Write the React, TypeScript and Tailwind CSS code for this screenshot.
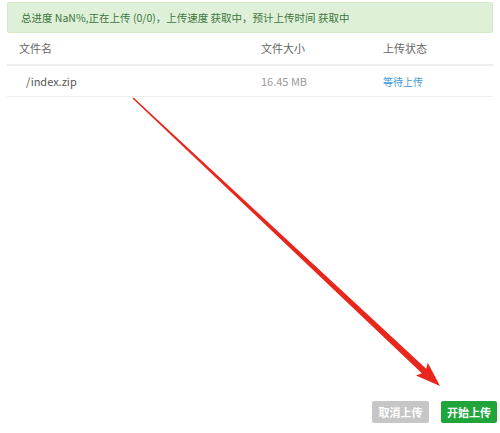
import React from "react";

export default function App() {
  const font = { fontFamily: '"Microsoft YaHei","Noto Sans CJK SC","Noto Sans",sans-serif' };
  return (
    <div className="relative w-[500px] h-[433px] bg-white flex flex-col overflow-hidden" style={font}>
      <div className="mx-[7px] mt-[2px] h-[31px] flex items-center pl-[13px] bg-[#dff0d8] border border-[#d6e9c6] rounded-[2px] text-[10.5px] text-[#3c763d]">
        总进度 NaN%,正在上传 (0/0)，上传速度 获取中，预计上传时间 获取中
      </div>
      <div className="mx-[7px] h-[33px] flex items-center border-b-2 border-[#eeeeee] text-[11px] text-[#666]">
        <div className="w-[254px] pl-[12px]">文件名</div>
        <div className="w-[122px]">文件大小</div>
        <div>上传状态</div>
      </div>
      <div className="mx-[7px] h-[31px] flex items-center border-b border-[#eeeeee] text-[11px]">
        <div className="w-[254px] pl-[19px] text-[#555]">/index.zip</div>
        <div className="w-[122px] text-[#999]">16.45 MB</div>
        <div className="text-[#3c9ad6] text-[10px]">等待上传</div>
      </div>
      <div className="flex-1" />
      <div className="flex justify-end gap-[12px] mr-[3px] mb-[10px]">
        <div className="w-[57px] h-[22px] flex items-center justify-center rounded-[2px] bg-[#c6c6c6] text-white text-[11px] font-bold">取消上传</div>
        <div className="w-[56px] h-[22px] flex items-center justify-center rounded-[2px] bg-[#20a53a] text-white text-[11px] font-bold">开始上传</div>
      </div>
      <svg className="absolute left-0 top-0" width="500" height="433" viewBox="0 0 500 433">
        <polygon
          points="132.5,98.6 421.8,373.3 416,375.5 440,386 427.8,362.8 426.2,368.7 133.5,97.5"
          fill="#e8261c"
        />
      </svg>
    </div>
  );
}
